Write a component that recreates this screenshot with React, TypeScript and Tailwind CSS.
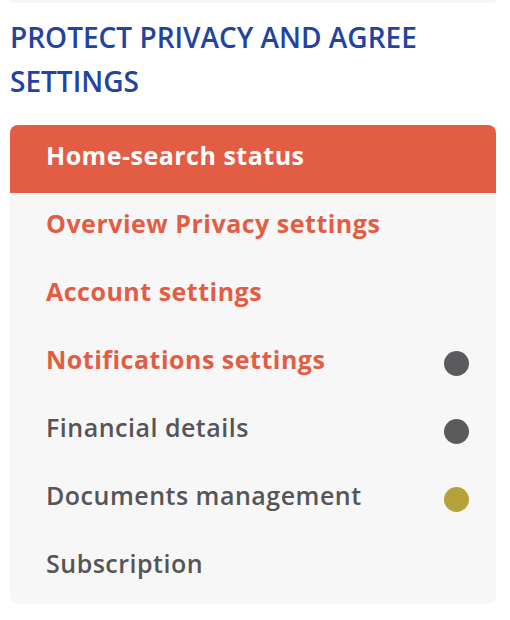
const items = [
  { label: 'Home-search status', tone: 'active' },
  { label: 'Overview Privacy settings', tone: 'accent' },
  { label: 'Account settings', tone: 'accent' },
  { label: 'Notifications settings', tone: 'accent', dot: 'bg-[#5b5b5d]' },
  { label: 'Financial details', tone: 'muted', dot: 'bg-[#5b5b5d]' },
  { label: 'Documents management', tone: 'muted', dot: 'bg-[#b5a23a]' },
  { label: 'Subscription', tone: 'muted' },
];

export default function App() {
  return (
    <div className="h-[620px] w-[510px] overflow-hidden bg-white font-['Open_Sans',sans-serif]">
      <div className="mx-[10px] h-[3px] w-[486px] rounded-b-lg bg-[#f7f7f7]" />

      <h2 className="px-[10px] pt-[12px] text-[28px] font-semibold uppercase leading-[44px] text-[#2343a0]">
        Protect privacy and agree
        <br />
        settings
      </h2>

      <nav className="ml-[10px] mt-[22px] w-[486px] overflow-hidden rounded-lg bg-[#f7f7f7] pb-[3px]">
        <ul>
          {items.map((item) => (
            <li
              key={item.label}
              className={
                item.tone === 'active'
                  ? 'flex h-[68px] items-center justify-between bg-[#e35d45] pb-[6px] pl-[36px] pr-[27px] text-[25px] font-bold tracking-[0.5px] text-white'
                  : item.tone === 'accent'
                    ? 'flex h-[68px] items-center justify-between pb-[6px] pl-[36px] pr-[27px] text-[25px] font-bold tracking-[0.5px] text-[#e35d45]'
                    : 'flex h-[68px] items-center justify-between pb-[6px] pl-[36px] pr-[27px] text-[25px] font-semibold tracking-[0.5px] text-[#555557]'
              }
            >
              <span>{item.label}</span>
              {item.dot && <span className={`mt-[6px] h-[25px] w-[25px] rounded-full ${item.dot}`} />}
            </li>
          ))}
        </ul>
      </nav>
    </div>
  );
}
